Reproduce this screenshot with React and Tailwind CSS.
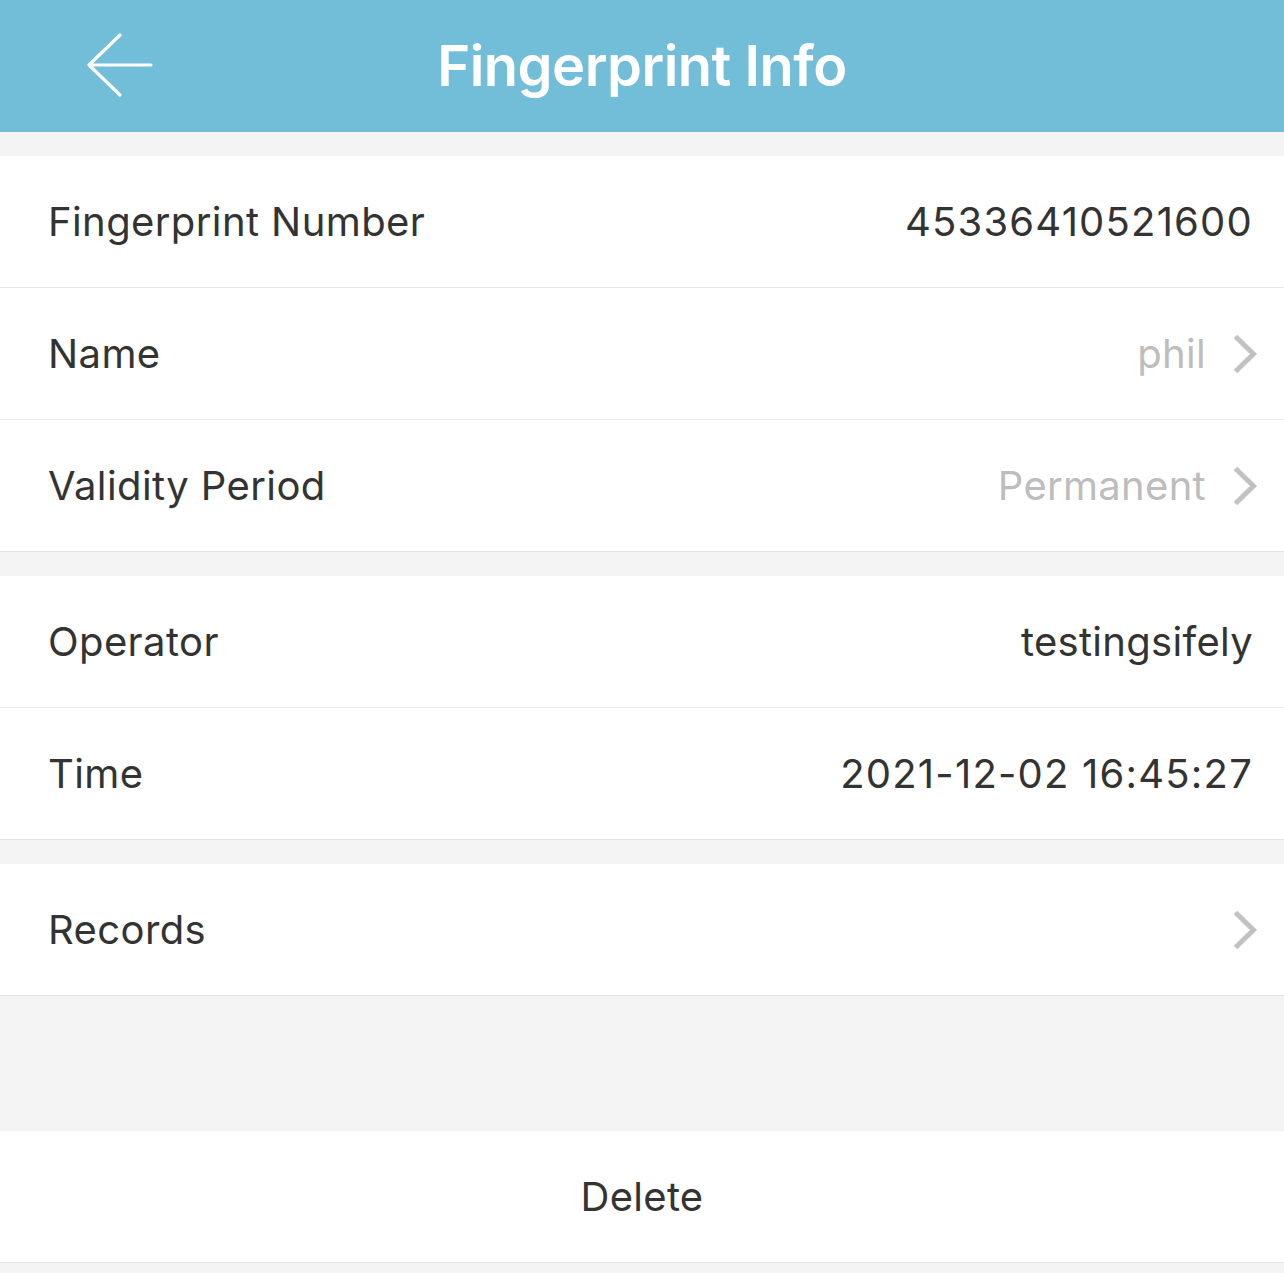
import React from "react";

const Chevron = () => (
  <svg width="26" height="42" viewBox="0 0 26 42" className="shrink-0">
    <path d="M3.5 3.5 L21.5 21 L3.5 38.5" fill="none" stroke="#c2c2c2" strokeWidth="5" strokeLinecap="butt" strokeLinejoin="miter" />
  </svg>
);

const Row = ({ label, value, link, last, digits }) => (
  <div className={"flex items-center h-[132px] bg-white pl-[50px] pr-[31px] " + (last ? "border-b border-[#e3e3e3]" : "border-b border-[#e8e8e8]")}>
    <span className="text-[40px] text-[#333333] flex-1 tracking-[0.4px] -ml-[2px]">{label}</span>
    {link ? (
      <div className="flex items-center gap-[26px] -mr-[5px]">
        {value && <span className="text-[40px] text-[#bdbdbd] tracking-[0.3px]">{value}</span>}
        <Chevron />
      </div>
    ) : (
      <span className={"text-[40px] text-[#333333] " + (digits ? "tracking-[1.2px]" : "tracking-[0.3px]")}>{value}</span>
    )}
  </div>
);

const App = () => {
  return (
    <div className="w-[1284px] min-h-[1273px] bg-[#f4f4f4]" style={{ fontFamily: "Inter, 'Noto Sans', sans-serif" }}>
      <div className="relative h-[132px] bg-[#72bdd8] flex items-center justify-center">
        <svg width="70" height="70" viewBox="0 0 70 70" className="absolute left-[84px] top-[30px]">
          <path d="M36 5 L5 35 L36 65 M5 35 L67 35" fill="none" stroke="#ffffff" strokeWidth="3.2" strokeLinecap="round" strokeLinejoin="round" />
        </svg>
        <h1 className="text-white text-[56px] font-semibold tracking-[-0.5px]">Fingerprint Info</h1>
      </div>

      <div className="h-[24px]" />
      <Row label="Fingerprint Number" value="45336410521600" digits />
      <Row label="Name" value="phil" link />
      <Row label="Validity Period" value="Permanent" link last />

      <div className="h-[24px]" />
      <Row label="Operator" value="testingsifely" />
      <Row label="Time" value="2021-12-02 16:45:27" digits last />

      <div className="h-[24px]" />
      <Row label="Records" link last />

      <div className="h-[135px]" />
      <button className="w-full h-[132px] bg-white border-b border-[#e3e3e3] text-[40px] text-[#333333] tracking-[0.3px]">Delete</button>
    </div>
  );
};

export default App;
